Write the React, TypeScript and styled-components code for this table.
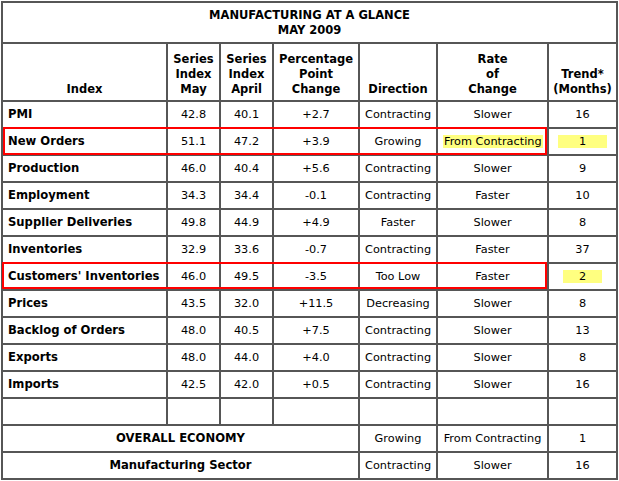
import { createGlobalStyle, styled } from "styled-components";

const GlobalStyle = createGlobalStyle`
  html, body {
    margin: 0;
    padding: 0;
    background: #fff;
  }
  body {
    font-family: "DejaVu Sans", Verdana, sans-serif;
    font-size: 11.3px;
    color: #000;
  }
`;

const Frame = styled.div`
  position: relative;
  width: 617px;
  margin: 1px 0 0 1px;
`;

const Table = styled.table`
  width: 617px;
  table-layout: fixed;
  border-collapse: collapse;
  border: 2px solid #606060;
`;

const Cell = styled.td<{ $align?: "left" | "center"; $bold?: boolean }>`
  border: 2px solid #565656;
  padding: 0 5px;
  height: 25px;
  text-align: ${({ $align }) => $align ?? "center"};
  font-weight: ${({ $bold }) => ($bold ? 700 : 400)};
  font-size: ${({ $bold }) => ($bold ? "11.6px" : "11.3px")};
  vertical-align: middle;
  white-space: nowrap;
  line-height: 15px;
`;

const HeadCell = styled.th`
  border: 2px solid #565656;
  padding: 0 2px 3px;
  height: 53px;
  text-align: center;
  vertical-align: bottom;
  font-weight: 700;
  font-size: 11.5px;
  line-height: 15px;
`;

const TitleCell = styled.th`
  border: 2px solid #565656;
  height: 37px;
  padding-top: 1px;
  text-align: center;
  vertical-align: middle;
  font-weight: 700;
  font-size: 11.5px;
  line-height: 15px;
`;

const Mark = styled.span<{ $pad?: number }>`
  background: #ffff80;
  padding: 0 ${({ $pad }) => $pad ?? 1}px;
`;

const RedBox = styled.div`
  position: absolute;
  border: 2px solid #ff0000;
  pointer-events: none;
`;

type CellValue = string | { text: string; pad: number };

type Row = {
  name: string;
  may: string;
  april: string;
  change: string;
  direction: string;
  rate: CellValue;
  trend: CellValue;
};

const rows: Row[] = [
  { name: "PMI", may: "42.8", april: "40.1", change: "+2.7", direction: "Contracting", rate: "Slower", trend: "16" },
  { name: "New Orders", may: "51.1", april: "47.2", change: "+3.9", direction: "Growing", rate: { text: "From Contracting", pad: 1 }, trend: { text: "1", pad: 21 } },
  { name: "Production", may: "46.0", april: "40.4", change: "+5.6", direction: "Contracting", rate: "Slower", trend: "9" },
  { name: "Employment", may: "34.3", april: "34.4", change: "-0.1", direction: "Contracting", rate: "Faster", trend: "10" },
  { name: "Supplier Deliveries", may: "49.8", april: "44.9", change: "+4.9", direction: "Faster", rate: "Slower", trend: "8" },
  { name: "Inventories", may: "32.9", april: "33.6", change: "-0.7", direction: "Contracting", rate: "Faster", trend: "37" },
  { name: "Customers' Inventories", may: "46.0", april: "49.5", change: "-3.5", direction: "Too Low", rate: "Faster", trend: { text: "2", pad: 16 } },
  { name: "Prices", may: "43.5", april: "32.0", change: "+11.5", direction: "Decreasing", rate: "Slower", trend: "8" },
  { name: "Backlog of Orders", may: "48.0", april: "40.5", change: "+7.5", direction: "Contracting", rate: "Slower", trend: "13" },
  { name: "Exports", may: "48.0", april: "44.0", change: "+4.0", direction: "Contracting", rate: "Slower", trend: "8" },
  { name: "Imports", may: "42.5", april: "42.0", change: "+0.5", direction: "Contracting", rate: "Slower", trend: "16" },
];

function Value({ v }: { v: CellValue }) {
  if (typeof v === "string") return <>{v}</>;
  return <Mark $pad={v.pad}>{v.text}</Mark>;
}

export default function App() {
  return (
    <>
      <GlobalStyle />
      <Frame>
        <Table>
          <colgroup>
            <col style={{ width: 165 }} />
            <col style={{ width: 53 }} />
            <col style={{ width: 53 }} />
            <col style={{ width: 86 }} />
            <col style={{ width: 78 }} />
            <col style={{ width: 111 }} />
            <col style={{ width: 69 }} />
          </colgroup>
          <thead>
            <tr>
              <TitleCell colSpan={7}>
                MANUFACTURING AT A GLANCE
                <br />
                MAY 2009
              </TitleCell>
            </tr>
            <tr>
              <HeadCell>Index</HeadCell>
              <HeadCell>
                Series
                <br />
                Index
                <br />
                May
              </HeadCell>
              <HeadCell>
                Series
                <br />
                Index
                <br />
                April
              </HeadCell>
              <HeadCell>
                Percentage
                <br />
                Point
                <br />
                Change
              </HeadCell>
              <HeadCell>Direction</HeadCell>
              <HeadCell>
                Rate
                <br />
                of
                <br />
                Change
              </HeadCell>
              <HeadCell>
                Trend*
                <br />
                (Months)
              </HeadCell>
            </tr>
          </thead>
          <tbody>
            {rows.map((r) => (
              <tr key={r.name}>
                <Cell $align="left" $bold>
                  {r.name}
                </Cell>
                <Cell>{r.may}</Cell>
                <Cell>{r.april}</Cell>
                <Cell>{r.change}</Cell>
                <Cell>{r.direction}</Cell>
                <Cell>
                  <Value v={r.rate} />
                </Cell>
                <Cell>
                  <Value v={r.trend} />
                </Cell>
              </tr>
            ))}
            <tr>
              <Cell />
              <Cell />
              <Cell />
              <Cell />
              <Cell />
              <Cell />
              <Cell />
            </tr>
            <tr>
              <Cell colSpan={4} $bold>
                OVERALL ECONOMY
              </Cell>
              <Cell>Growing</Cell>
              <Cell>From Contracting</Cell>
              <Cell>1</Cell>
            </tr>
            <tr>
              <Cell colSpan={4} $bold>
                Manufacturing Sector
              </Cell>
              <Cell>Contracting</Cell>
              <Cell>Slower</Cell>
              <Cell>16</Cell>
            </tr>
          </tbody>
        </Table>
        <RedBox style={{ left: 2, top: 126, width: 540, height: 24 }} />
        <RedBox style={{ left: 1, top: 261, width: 541, height: 23 }} />
      </Frame>
    </>
  );
}
